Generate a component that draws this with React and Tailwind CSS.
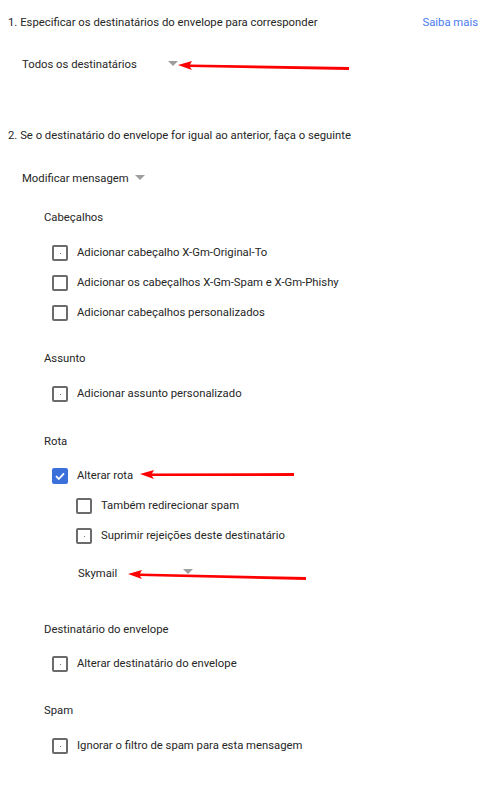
import React from 'react'

function Box({ checked, dot }) {
  if (checked) {
    return (
      <span className="flex h-[16px] w-[16px] items-center justify-center rounded-[2px] bg-[#3b6fd9]">
        <svg width="12" height="12" viewBox="0 0 12 12">
          <path d="M2 6.2 L4.8 9 L10 3.4" fill="none" stroke="#fff" strokeWidth="1.8" />
        </svg>
      </span>
    )
  }
  return (
    <span className="flex h-[16px] w-[16px] items-center justify-center rounded-[2px] border-2 border-[#6b6b6b]">
      {dot && <span className="h-[1px] w-[1px] bg-[#777]" />}
    </span>
  )
}

function Arrow({ width, slope = 2 }) {
  return (
    <svg width={width} height="14" viewBox={`0 0 ${width} 14`} className="block">
      <polygon points={`0,6 14,2 12,5.5 ${width},${6 + slope} ${width},${9 + slope} 12,8 14,11`} fill="#f00" />
    </svg>
  )
}

function Caret() {
  return (
    <svg width="10" height="5" viewBox="0 0 10 5" className="block">
      <polygon points="0,0 10,0 5,5" fill="#9e9e9e" />
    </svg>
  )
}

function Check({ label, checked, dot, indent = 'pl-[52px]', mt = 'mt-0' }) {
  return (
    <div className={`flex h-[30px] items-center ${indent} ${mt}`}>
      <Box checked={checked} dot={dot} />
      <span className="ml-[9px]">{label}</span>
    </div>
  )
}

export default function App() {
  return (
    <div
      className="relative min-h-[785px] w-[492px] bg-white text-[11.3px] text-[#262626]"
      style={{ fontFamily: 'Roboto, "Liberation Sans", sans-serif' }}
    >
      <div className="pt-[8px]">
        <div className="flex h-[30px] items-center justify-between pl-[8px] pr-[14px]">
          <span>1. Especificar os destinatários do envelope para corresponder</span>
          <span className="text-[#4a7cf0]">Saiba mais</span>
        </div>

        <div className="relative mt-[12px] flex h-[30px] items-center pl-[22px]">
          <span>Todos os destinatários</span>
          <span className="ml-[31px] -mt-[3px]"><Caret /></span>
          <span className="absolute left-[178px] top-[9px]"><Arrow width={171} /></span>
        </div>

        <div className="mt-[41px] flex h-[30px] items-center pl-[8px]">
          2. Se o destinatário do envelope for igual ao anterior, faça o seguinte
        </div>

        <div className="mt-[13px] flex h-[30px] items-center pl-[22px]">
          <span>Modificar mensagem</span>
          <span className="ml-[6px] -mt-[3px]"><Caret /></span>
        </div>

        <div className="mt-[9px] flex h-[30px] items-center pl-[44px]">Cabeçalhos</div>
        <Check mt="mt-[5px]" dot label="Adicionar cabeçalho X-Gm-Original-To" />
        <Check label="Adicionar os cabeçalhos X-Gm-Spam e X-Gm-Phishy" />
        <Check label="Adicionar cabeçalhos personalizados" />

        <div className="mt-[16px] flex h-[30px] items-center pl-[44px]">Assunto</div>
        <Check mt="mt-[5px]" dot label="Adicionar assunto personalizado" />

        <div className="mt-[18px] flex h-[30px] items-center pl-[44px]">Rota</div>
        <div className="relative mt-[4px] flex h-[30px] items-center pl-[52px]">
          <Box checked />
          <span className="ml-[9px]">Alterar rota</span>
          <span className="absolute left-[140px] top-[7px]"><Arrow width={154} slope={-1} /></span>
        </div>
        <Check indent="pl-[76px]" label="Também redirecionar spam" />
        <Check indent="pl-[76px]" dot label="Suprimir rejeições deste destinatário" />

        <div className="relative mt-[8px] flex h-[30px] items-center pl-[78px]">
          <span>Skymail</span>
          <span className="ml-[66px] -mt-[6px]"><Caret /></span>
          <span className="absolute left-[128px] top-[9px]"><Arrow width={178} slope={3} /></span>
        </div>

        <div className="mt-[26px] flex h-[30px] items-center pl-[44px]">Destinatário do envelope</div>
        <Check mt="mt-[4px]" dot label="Alterar destinatário do envelope" />

        <div className="mt-[17px] flex h-[30px] items-center pl-[44px]">Spam</div>
        <Check mt="mt-[5px]" dot label="Ignorar o filtro de spam para esta mensagem" />
      </div>
    </div>
  )
}
